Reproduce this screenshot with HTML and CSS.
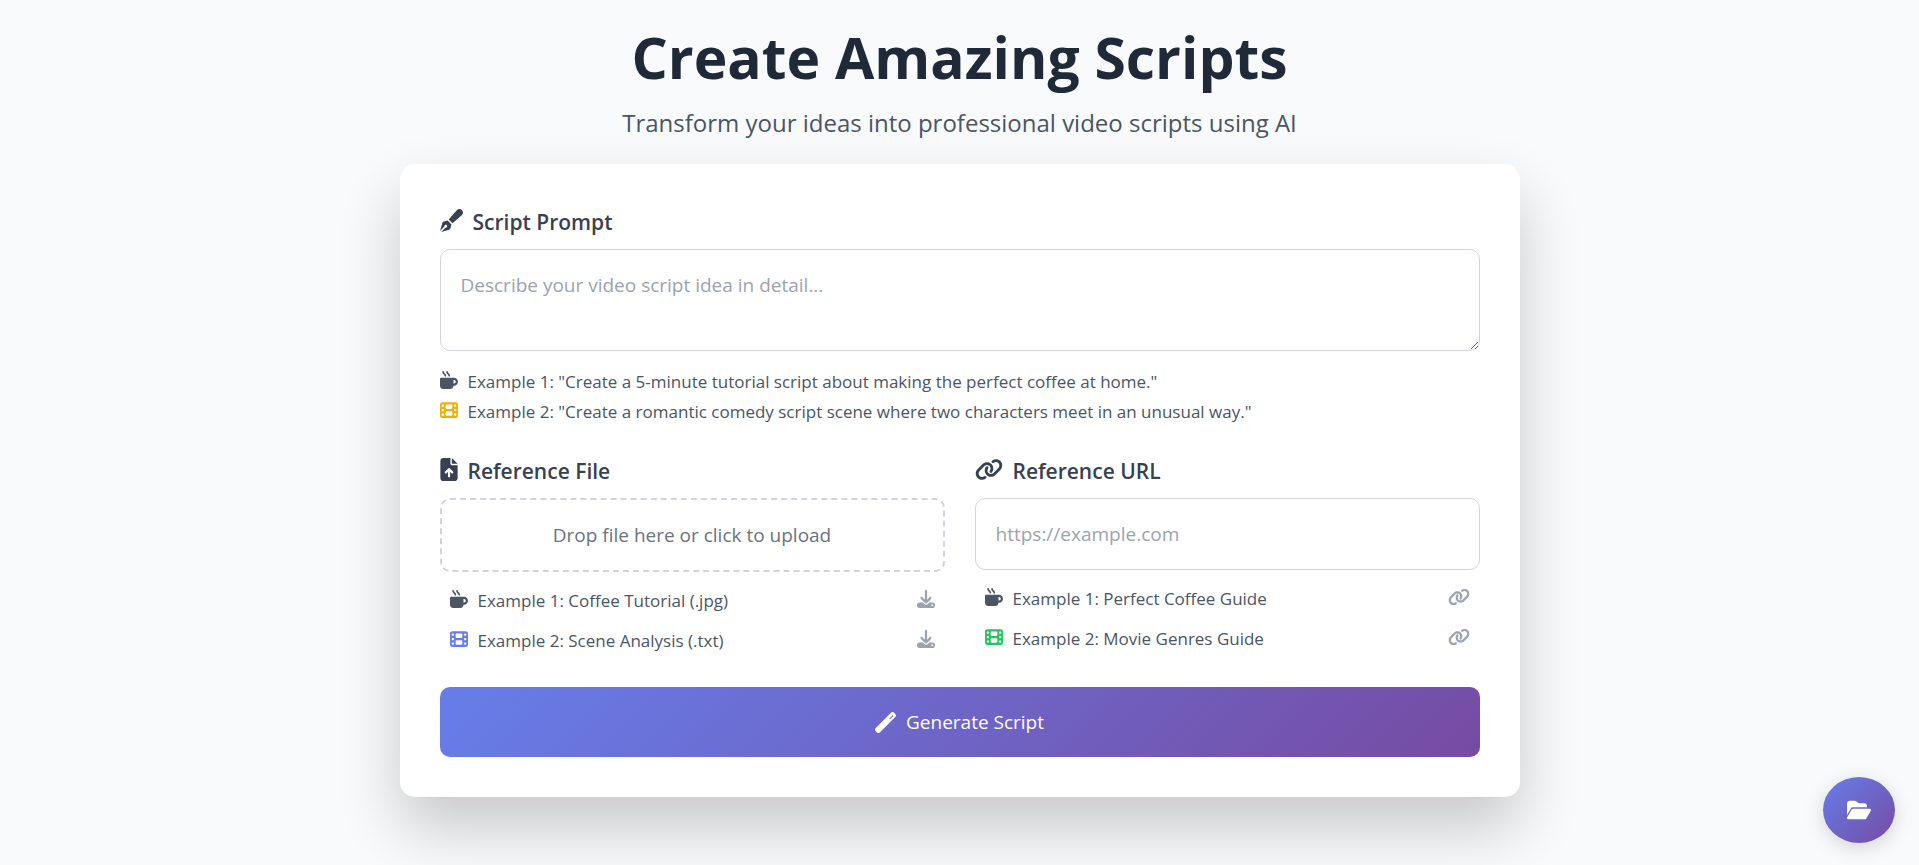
FILE: index.html
```html
<!DOCTYPE html>
<html lang="en">
<head>
<meta charset="utf-8">
<meta name="viewport" content="width=device-width, initial-scale=1">
<title>Create Amazing Scripts</title>
<link rel="stylesheet" href="styles.css">
</head>
<body>
<svg class="sprite" aria-hidden="true">
  <symbol id="pen" viewBox="0 0 512 512"><path d="M373.5 27.1C388.5 9.9 410.2 0 433 0c43.6 0 79 35.4 79 79c0 22.8-9.9 44.6-27.1 59.6L277.7 319l-10.3-10.3-64-64L193 234.3 373.5 27.1zM170.3 256.9l10.4 10.4 64 64 10.4 10.4-19.2 83.4c-3.9 17.1-16.9 30.7-33.8 35.4L24.4 510.3l95.4-95.4c2.6 .7 5.4 1.1 8.3 1.1c17.7 0 32-14.3 32-32s-14.3-32-32-32s-32 14.3-32 32c0 2.9 .4 5.6 1.1 8.3L1.7 487.6 51.5 310c4.7-16.9 18.3-29.9 35.4-33.8l83.4-19.2z"/></symbol>
  <symbol id="mug" viewBox="0 0 512 512"><path d="M88 0C74.7 0 64 10.7 64 24c0 38.9 23.4 59.4 39.1 73.1l1.1 1C120.5 112.3 128 119.9 128 136c0 13.3 10.7 24 24 24s24-10.7 24-24c0-38.9-23.4-59.4-39.1-73.1l-1.1-1C119.5 47.7 112 40.1 112 24c0-13.3-10.7-24-24-24zM32 192c-17.7 0-32 14.3-32 32V416c0 53 43 96 96 96H288c53 0 96-43 96-96h16c61.9 0 112-50.1 112-112s-50.1-112-112-112H352 32zm352 64h16c26.5 0 48 21.5 48 48s-21.5 48-48 48H384V256zM224 24c0-13.3-10.7-24-24-24s-24 10.7-24 24c0 38.9 23.4 59.4 39.1 73.1l1.1 1C232.5 112.3 240 119.9 240 136c0 13.3 10.7 24 24 24s24-10.7 24-24c0-38.9-23.4-59.4-39.1-73.1l-1.1-1C231.5 47.7 224 40.1 224 24z"/></symbol>
  <symbol id="film" viewBox="0 0 512 512"><path d="M0 96C0 60.7 28.7 32 64 32H448c35.3 0 64 28.7 64 64V416c0 35.3-28.7 64-64 64H64c-35.3 0-64-28.7-64-64V96zM48 368v32c0 8.8 7.2 16 16 16H96c8.8 0 16-7.2 16-16V368c0-8.8-7.2-16-16-16H64c-8.8 0-16 7.2-16 16zm368-16c-8.8 0-16 7.2-16 16v32c0 8.8 7.2 16 16 16h32c8.8 0 16-7.2 16-16V368c0-8.8-7.2-16-16-16H416zM48 240v32c0 8.8 7.2 16 16 16H96c8.8 0 16-7.2 16-16V240c0-8.8-7.2-16-16-16H64c-8.8 0-16 7.2-16 16zm368-16c-8.8 0-16 7.2-16 16v32c0 8.8 7.2 16 16 16h32c8.8 0 16-7.2 16-16V240c0-8.8-7.2-16-16-16H416zM48 112v32c0 8.8 7.2 16 16 16H96c8.8 0 16-7.2 16-16V112c0-8.8-7.2-16-16-16H64c-8.8 0-16 7.2-16 16zM416 96c-8.8 0-16 7.2-16 16v32c0 8.8 7.2 16 16 16h32c8.8 0 16-7.2 16-16V112c0-8.8-7.2-16-16-16H416zM160 128v64c0 17.7 14.3 32 32 32H320c17.7 0 32-14.3 32-32V128c0-17.7-14.3-32-32-32H192c-17.7 0-32 14.3-32 32zm32 160c-17.7 0-32 14.3-32 32v64c0 17.7 14.3 32 32 32H320c17.7 0 32-14.3 32-32V320c0-17.7-14.3-32-32-32H192z"/></symbol>
  <symbol id="file-up" viewBox="0 0 384 512"><path d="M64 0C28.7 0 0 28.7 0 64V448c0 35.3 28.7 64 64 64H320c35.3 0 64-28.7 64-64V160H256c-17.7 0-32-14.3-32-32V0H64zM256 0V128H384L256 0zM216 408c0 13.3-10.7 24-24 24s-24-10.7-24-24V305.9l-31 31c-9.4 9.4-24.6 9.4-33.9 0s-9.4-24.6 0-33.9l72-72c9.4-9.4 24.6-9.4 33.9 0l72 72c9.4 9.4 9.4 24.6 0 33.9s-24.6 9.4-33.9 0l-31-31V408z"/></symbol>
  <symbol id="link" viewBox="0 0 640 512"><path d="M579.8 267.7c56.5-56.5 56.5-148 0-204.5c-50-50-128.8-56.5-186.3-15.4l-1.6 1.1c-14.4 10.3-17.7 30.3-7.4 44.6s30.3 17.7 44.6 7.4l1.6-1.1c32.1-22.9 76-19.3 103.8 8.6c31.5 31.5 31.5 82.5 0 114L422.3 334.8c-31.5 31.5-82.5 31.5-114 0c-27.9-27.9-31.5-71.8-8.6-103.8l1.1-1.6c10.3-14.4 6.9-34.4-7.4-44.6s-34.4-6.9-44.6 7.4l-1.1 1.6C206.5 251.2 213 330 263 380c56.5 56.5 148 56.5 204.5 0L579.8 267.7zM60.2 244.3c-56.5 56.5-56.5 148 0 204.5c50 50 128.8 56.5 186.3 15.4l1.6-1.1c14.4-10.3 17.7-30.3 7.4-44.6s-30.3-17.7-44.6-7.4l-1.6 1.1c-32.1 22.9-76 19.3-103.8-8.6C74 372 74 321 105.5 289.5L217.7 177.2c31.5-31.5 82.5-31.5 114 0c27.9 27.9 31.5 71.8 8.6 103.9l-1.1 1.6c-10.3 14.4-6.9 34.4 7.4 44.6s34.4 6.9 44.6-7.4l1.1-1.6C433.5 260.8 427 182 377 132c-56.5-56.5-148-56.5-204.5 0L60.2 244.3z"/></symbol>
  <symbol id="download" viewBox="0 0 512 512"><path d="M288 32c0-17.7-14.3-32-32-32s-32 14.3-32 32V274.7l-73.4-73.4c-12.5-12.5-32.8-12.5-45.3 0s-12.5 32.8 0 45.3l128 128c12.5 12.5 32.8 12.5 45.3 0l128-128c12.5-12.5 12.5-32.8 0-45.3s-32.8-12.5-45.3 0L288 274.7V32zM64 352c-35.3 0-64 28.7-64 64v32c0 35.3 28.7 64 64 64H448c35.3 0 64-28.7 64-64V416c0-35.3-28.7-64-64-64H346.5l-45.3 45.3c-25 25-65.5 25-90.5 0L165.5 352H64zm368 56a24 24 0 1 1 0 48 24 24 0 1 1 0-48z"/></symbol>
  <symbol id="wand" viewBox="0 0 512 512"><path d="M14.1 463.3c-18.7-18.7-18.7-49.1 0-67.9L395.4 14.1c18.7-18.7 49.1-18.7 67.9 0l34.6 34.6c18.7 18.7 18.7 49.1 0 67.9L116.5 497.9c-18.7 18.7-49.1 18.7-67.9 0L14.1 463.3zM365 181l84-84-18-18-84 84 18 18z"/></symbol>
  <symbol id="folder" viewBox="0 0 576 512"><path d="M88.7 223.8L0 375.8V96C0 60.7 28.7 32 64 32H181.5c17 0 33.3 6.7 45.3 18.7l26.5 26.5c12 12 28.3 18.7 45.3 18.7H416c35.3 0 64 28.7 64 64v32H144c-22.8 0-43.8 12.1-55.3 31.8zm27.6 16.1C122.1 230 132.6 224 144 224H544c11.5 0 22 6.1 27.7 16.1s5.7 22.2-.1 32.1l-112 192C453.9 474 443.4 480 432 480H32c-11.5 0-22-6.1-27.7-16.1s-5.7-22.2 .1-32.1l112-192z"/></symbol>
</svg>

<main class="page">
  <header class="header">
    <h1 class="title">Create Amazing Scripts</h1>
    <p class="subtitle">Transform your ideas into professional video scripts using AI</p>
  </header>

  <form class="card">
    <section class="prompt">
      <label class="label" for="prompt"><svg class="icon icon-lg"><use href="#pen"/></svg>Script Prompt</label>
      <textarea class="field" id="prompt" rows="2" placeholder="Describe your video script idea in detail..."></textarea>
      <ul class="hints">
        <li class="hint"><svg class="icon icon-sm"><use href="#mug"/></svg>Example 1: "Create a 5-minute tutorial script about making the perfect coffee at home."</li>
        <li class="hint"><svg class="icon icon-sm yellow"><use href="#film"/></svg>Example 2: "Create a romantic comedy script scene where two characters meet in an unusual way."</li>
      </ul>
    </section>

    <div class="columns">
      <section>
        <h2 class="label"><svg class="icon icon-lg icon-file"><use href="#file-up"/></svg>Reference File</h2>
        <button class="drop" type="button">Drop file here or click to upload</button>
        <ul class="examples">
          <li><a class="example" href="#"><svg class="icon icon-sm"><use href="#mug"/></svg><span class="name">Example 1: Coffee Tutorial (.jpg)</span><svg class="icon icon-sm muted"><use href="#download"/></svg></a></li>
          <li><a class="example" href="#"><svg class="icon icon-sm indigo"><use href="#film"/></svg><span class="name">Example 2: Scene Analysis (.txt)</span><svg class="icon icon-sm muted"><use href="#download"/></svg></a></li>
        </ul>
      </section>
      <section>
        <label class="label" for="url"><svg class="icon icon-lg icon-link-lg"><use href="#link"/></svg>Reference URL</label>
        <input class="field" id="url" type="url" placeholder="https://example.com">
        <ul class="examples">
          <li><a class="example" href="#"><svg class="icon icon-sm"><use href="#mug"/></svg><span class="name">Example 1: Perfect Coffee Guide</span><svg class="icon icon-sm icon-link-sm muted"><use href="#link"/></svg></a></li>
          <li><a class="example" href="#"><svg class="icon icon-sm green"><use href="#film"/></svg><span class="name">Example 2: Movie Genres Guide</span><svg class="icon icon-sm icon-link-sm muted"><use href="#link"/></svg></a></li>
        </ul>
      </section>
    </div>

    <button class="generate" type="submit"><svg class="icon icon-md"><use href="#wand"/></svg>Generate Script</button>
  </form>
</main>

<button class="fab" type="button" aria-label="Open saved scripts"><svg class="icon icon-folder"><use href="#folder"/></svg></button>
</body>
</html>
```

FILE: styles.css
```css
* { box-sizing: border-box; }

body {
  margin: 0;
  background: #f9fafc;
  color: #4b5563;
  font-family: "Segoe UI", "Open Sans", "Noto Sans", sans-serif;
  font-size: 19px;
  line-height: 30px;
}

h1, h2, p, ul { margin: 0; padding: 0; }
ul { list-style: none; }
button, input, textarea { font: inherit; }

.sprite { display: none; }

.page {
  max-width: 1120px;
  margin: 0 auto;
  padding: 27px 0 68px;
}

.header {
  text-align: center;
  margin-bottom: 23px;
}

.title {
  color: #1f2937;
  font-size: 57px;
  font-weight: 700;
  line-height: 60px;
  margin-bottom: 18px;
}

.subtitle {
  font-size: 24px;
  line-height: 36px;
}

.card {
  display: flex;
  flex-direction: column;
  gap: 26px;
  padding: 40px;
  border-radius: 15px;
  background: #fff;
  box-shadow: 0 31px 62px rgba(0, 0, 0, 0.2);
}

.label {
  display: flex;
  align-items: center;
  gap: 10px;
  margin-bottom: 8px;
  color: #374151;
  font-size: 21px;
  font-weight: 600;
  line-height: 37px;
}

.icon {
  flex: none;
  fill: currentColor;
}

.icon-lg { width: 23px; height: 23px; margin-bottom: 4px; }
.icon-md { width: 21px; height: 21px; }
.icon-sm { width: 18px; height: 18px; margin-bottom: 4px; }
.icon-file { width: 18px; }
.icon-link-lg { width: 28px; }
.icon-link-sm { width: 22px; }
.icon-folder { width: 24px; height: 22px; }

.yellow { color: #eab308; }
.indigo { color: #667eea; }
.green { color: #22c55e; }
.muted { color: #9ca3af; }

.field {
  display: block;
  width: 100%;
  padding: 20px;
  border: 1px solid #d1d5db;
  border-radius: 10px;
  background: #fff;
  color: #374151;
}

.field::placeholder { color: #9ca3af; }
textarea.field { resize: vertical; }
input.field { height: 72px; }

.hints {
  margin-top: 16px;
  font-size: 17px;
}

.hint {
  display: flex;
  align-items: center;
  gap: 10px;
}

.columns {
  display: grid;
  grid-template-columns: 1fr 1fr;
  gap: 30px;
}

.drop {
  display: block;
  width: 100%;
  padding: 20px;
  border: 2px dashed #d1d5db;
  border-radius: 10px;
  background: #fff;
  color: #6b7280;
}

.examples {
  margin-top: 9px;
  font-size: 17px;
}

.example {
  display: flex;
  align-items: center;
  gap: 10px;
  padding: 5px 10px;
  color: inherit;
  text-decoration: none;
}

.name { flex: 1; }

.generate {
  display: flex;
  align-items: center;
  justify-content: center;
  gap: 10px;
  padding: 20px;
  border: 0;
  border-radius: 10px;
  background: linear-gradient(135deg, #667eea 0%, #764ba2 100%);
  color: #fff;
}

.fab {
  position: fixed;
  right: 24px;
  bottom: 22px;
  display: flex;
  padding: 22px 24px;
  border: 0;
  border-radius: 50%;
  background: linear-gradient(135deg, #667eea 0%, #764ba2 100%);
  box-shadow: 0 5px 20px rgba(0, 0, 0, 0.15);
  color: #fff;
}
```
